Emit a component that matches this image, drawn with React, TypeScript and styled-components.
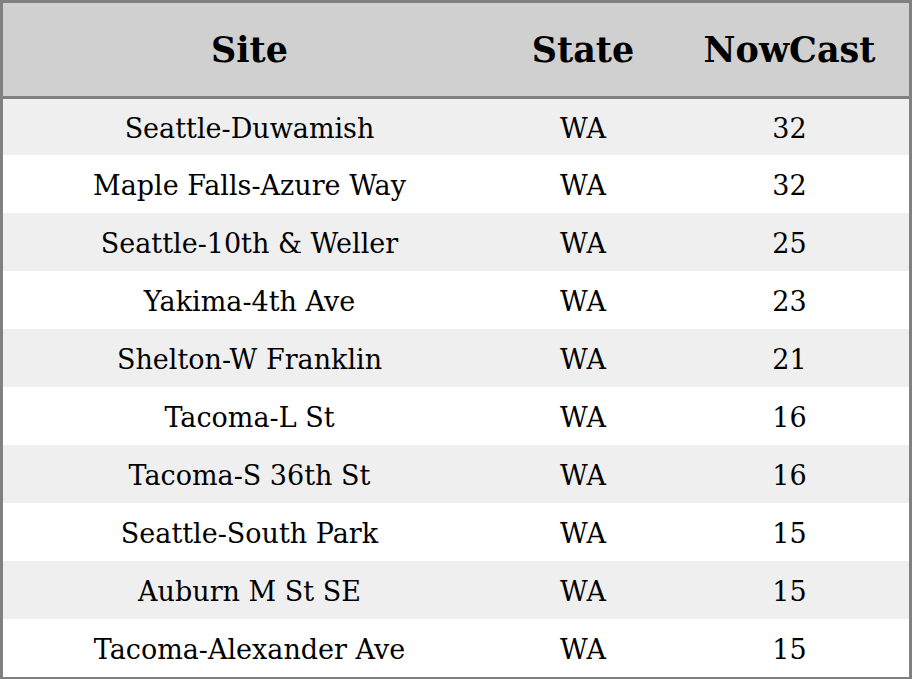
import styled, { createGlobalStyle } from 'styled-components'

const GlobalStyle = createGlobalStyle`
  html, body {
    margin: 0;
    padding: 0;
    background: #ffffff;
  }
`

const Table = styled.table`
  width: 912px;
  border-collapse: separate;
  border-spacing: 0;
  border: 3px solid #808080;
  font-family: 'DejaVu Serif', serif;
  color: #000;
`

const HeadCell = styled.th<{ $width: number }>`
  width: ${({ $width }) => $width}px;
  height: 93px;
  padding: 0;
  background: #d0d0d0;
  border-bottom: 3px solid #808080;
  font-size: 35px;
  font-weight: bold;
  text-align: center;
`

const Row = styled.tr<{ $striped: boolean }>`
  background: ${({ $striped }) => ($striped ? '#efefef' : '#ffffff')};
`

const Cell = styled.td<{ $first: boolean }>`
  height: ${({ $first }) => ($first ? 54 : 56)}px;
  padding: 2px 0 0;
  font-size: 27px;
  line-height: 1;
  text-align: center;
`

const rows = [
  ['Seattle-Duwamish', 'WA', 32],
  ['Maple Falls-Azure Way', 'WA', 32],
  ['Seattle-10th & Weller', 'WA', 25],
  ['Yakima-4th Ave', 'WA', 23],
  ['Shelton-W Franklin', 'WA', 21],
  ['Tacoma-L St', 'WA', 16],
  ['Tacoma-S 36th St', 'WA', 16],
  ['Seattle-South Park', 'WA', 15],
  ['Auburn M St SE', 'WA', 15],
  ['Tacoma-Alexander Ave', 'WA', 15],
] as const

export default function App() {
  return (
    <>
      <GlobalStyle />
      <Table>
        <thead>
          <tr>
            <HeadCell $width={493}>Site</HeadCell>
            <HeadCell $width={174}>State</HeadCell>
            <HeadCell $width={239}>NowCast</HeadCell>
          </tr>
        </thead>
        <tbody>
          {rows.map(([site, state, value], i) => (
            <Row key={site} $striped={i % 2 === 0}>
              <Cell $first={i === 0}>{site}</Cell>
              <Cell $first={i === 0}>{state}</Cell>
              <Cell $first={i === 0}>{value}</Cell>
            </Row>
          ))}
        </tbody>
      </Table>
    </>
  )
}
